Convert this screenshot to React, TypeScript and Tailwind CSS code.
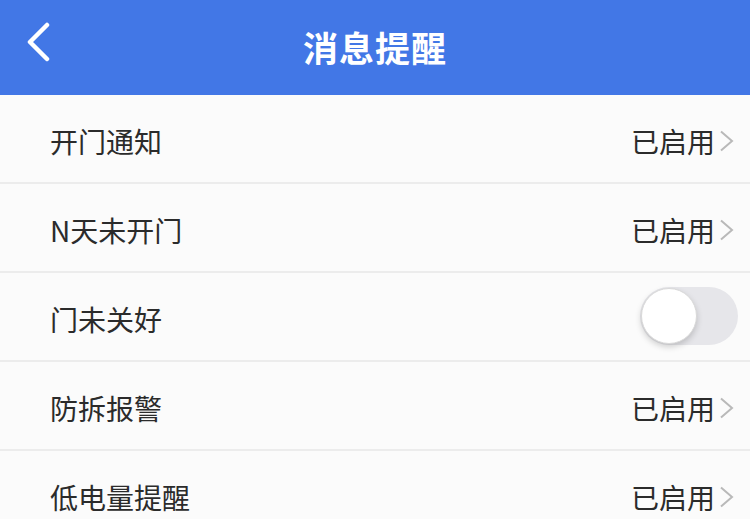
import { useState } from "react";

type Item = {
  label: string;
  kind: "link" | "toggle";
};

const items: Item[] = [
  { label: "开门通知", kind: "link" },
  { label: "N天未开门", kind: "link" },
  { label: "门未关好", kind: "toggle" },
  { label: "防拆报警", kind: "link" },
  { label: "低电量提醒", kind: "link" },
];

function Chevron() {
  return (
    <svg width="18" height="22" viewBox="0 0 18 22" className="ml-[2px]">
      <path d="M4 1.5 L15 11 L4 20.5" fill="none" stroke="#b9b9b9" strokeWidth="2" />
    </svg>
  );
}

function Toggle() {
  const [on, setOn] = useState(false);
  return (
    <button
      onClick={() => setOn(!on)}
      className={`relative w-[98px] h-[58px] rounded-full ${on ? "bg-[#4caf50]" : "bg-[#e6e6ea]"}`}
    >
      <span
        className={`absolute top-[1px] w-[56px] h-[56px] rounded-full bg-white border border-[#d9d9d9] shadow-[0_3px_6px_rgba(0,0,0,0.18)] ${on ? "left-[41px]" : "left-[1px]"}`}
      />
    </button>
  );
}

export default function App() {
  return (
    <div
      className="w-[750px] h-[519px] overflow-hidden bg-[#fbfbfb]"
      style={{ fontFamily: '"Noto Sans CJK SC", "Noto Sans", sans-serif' }}
    >
      {/* Header */}
      <div className="relative h-[95px] bg-[#4277e6] flex items-center justify-center">
        <button className="absolute left-[25px] top-[22px]">
          <svg width="28" height="40" viewBox="0 0 28 40">
            <path d="M22 3 L5 20 L22 37" fill="none" stroke="#ffffff" strokeWidth="4.5" strokeLinecap="round" strokeLinejoin="round" />
          </svg>
        </button>
        <h1 className="text-white text-[35px] font-bold tracking-[1px]">消息提醒</h1>
      </div>

      {/* List */}
      <div>
        {items.map((item) => (
          <div
            key={item.label}
            className="h-[89px] flex items-center justify-between pl-[50px] pr-[15px] border-b-2 border-[#ececec]"
          >
            <span className="text-[28px] text-[#2b2b2b] pt-[4px]">{item.label}</span>
            {item.kind === "link" ? (
              <div className="flex items-center pt-[4px]">
                <span className="text-[28px] text-[#2b2b2b]">已启用</span>
                <Chevron />
              </div>
            ) : (
              <div className="-mr-[3px] pt-[3px]">
                <Toggle />
              </div>
            )}
          </div>
        ))}
      </div>
    </div>
  );
}
